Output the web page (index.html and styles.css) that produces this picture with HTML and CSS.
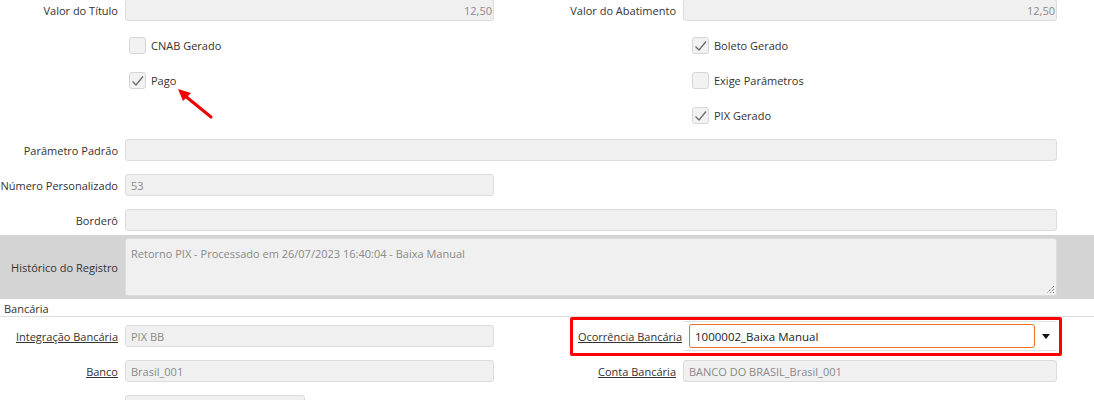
FILE: index.html
```html
<!DOCTYPE html>
<html lang="pt-BR">
<head>
<meta charset="utf-8">
<title>Registro</title>
<link rel="stylesheet" href="styles.css">
</head>
<body>
<div class="page">
  <div class="form">
    <div class="lbl">Valor do Título</div>
    <div class="field num">12,50</div>
    <div class="lbl">Valor do Abatimento</div>
    <div class="field num">12,50</div>

    <div></div>
    <div class="chk-wrap"><span class="chk"></span><span class="chk-text">CNAB Gerado</span></div>
    <div></div>
    <div class="chk-wrap right"><span class="chk on"><svg viewBox="0 0 17 17" width="17" height="17"><path d="M3.5 9.5 L7 13 L14 4.5" fill="none" stroke="#6b6b6b" stroke-width="1.3"/></svg></span><span class="chk-text">Boleto Gerado</span></div>

    <div></div>
    <div class="chk-wrap"><span class="chk on"><svg viewBox="0 0 17 17" width="17" height="17"><path d="M3.5 9.5 L7 13 L14 4.5" fill="none" stroke="#6b6b6b" stroke-width="1.3"/></svg></span><span class="chk-text">Pago</span></div>
    <div></div>
    <div class="chk-wrap right"><span class="chk"></span><span class="chk-text">Exige Parâmetros</span></div>

    <div></div>
    <div></div>
    <div></div>
    <div class="chk-wrap right"><span class="chk on"><svg viewBox="0 0 17 17" width="17" height="17"><path d="M3.5 9.5 L7 13 L14 4.5" fill="none" stroke="#6b6b6b" stroke-width="1.3"/></svg></span><span class="chk-text">PIX Gerado</span></div>

    <div class="lbl">Parâmetro Padrão</div>
    <div class="field span3"></div>

    <div class="lbl">Número Personalizado</div>
    <div class="field">53</div>
    <div></div>
    <div></div>

    <div class="lbl">Borderô</div>
    <div class="field span3"></div>
  </div>

  <div class="hist">
    <div class="lbl hist-lbl">Histórico do Registro</div>
    <div class="textarea">Retorno PIX - Processado em 26/07/2023 16:40:04 - Baixa Manual<svg class="grip" viewBox="0 0 10 10" width="10" height="10"><path d="M9 2 L2 9 M9 5 L5 9 M9 8 L8 9" stroke="#555" stroke-width="1" stroke-dasharray="1 1"/></svg></div>
  </div>

  <div class="section">Bancária</div>

  <div class="form bank">
    <div class="lbl link">Integração Bancária</div>
    <div class="field">PIX BB</div>
    <div class="lbl link occ-lbl">Ocorrência Bancária</div>
    <div class="combo">
      <div class="combo-input">1000002_Baixa Manual</div>
      <div class="combo-btn"><span class="caret"></span></div>
    </div>

    <div class="lbl link">Banco</div>
    <div class="field">Brasil_001</div>
    <div class="lbl link">Conta Bancária</div>
    <div class="field">BANCO DO BRASIL_Brasil_001</div>

    <div></div>
    <div class="field short"></div>
  </div>

  <div class="highlight"></div>
  <svg class="arrow" viewBox="0 0 50 40" width="50" height="40">
    <line x1="41" y1="33" x2="14" y2="11" stroke="#f00000" stroke-width="3" stroke-linecap="round"/>
    <polygon points="8,5 21,9 13,17" fill="#f00000"/>
  </svg>
</div>
</body>
</html>
```
FILE: styles.css
```css
* { box-sizing: border-box; }
html, body { margin: 0; padding: 0; background: #fff; }
body {
  font-family: "Open Sans", "Noto Sans", sans-serif;
  font-size: 11px;
  color: #333;
  width: 1094px;
  height: 400px;
  overflow: hidden;
}
.page { position: relative; }

.form {
  display: grid;
  grid-template-columns: 118px 369px 175px 374px;
  grid-auto-rows: 22px;
  column-gap: 7px;
  row-gap: 13px;
  margin-top: -1px;
}
.lbl {
  display: flex;
  align-items: center;
  justify-content: flex-end;
  white-space: nowrap;
  color: #333;
}
.field {
  background: #f0f0f0;
  border: 1px solid #dcdcdc;
  border-radius: 3px;
  color: #8a8a8a;
  display: flex;
  align-items: center;
  padding: 0 5px;
  white-space: nowrap;
  overflow: hidden;
}
.field.num { justify-content: flex-end; padding-right: 1px; }
.span3 { grid-column: 2 / 5; }

.chk-wrap { display: flex; align-items: center; padding-left: 4px; }
.chk-wrap.right { padding-left: 9px; }
.chk {
  width: 17px; height: 17px;
  border: 1px solid #d6d6d6;
  border-radius: 3px;
  background: #f2f2f2;
  display: inline-block;
  position: relative;
  flex: none;
}
.chk svg { position: absolute; left: -1px; top: -1px; }
.chk-text { margin-left: 5px; color: #333; }

.hist {
  display: flex;
  background: #d4d4d4;
  margin-top: 4px;
  height: 64px;
  padding: 3px 0;
  column-gap: 7px;
}
.hist-lbl { width: 118px; flex: none; }
.textarea {
  width: 932px;
  height: 58px;
  background: #f0f0f0;
  border: 1px solid #dcdcdc;
  border-radius: 3px;
  color: #8a8a8a;
  padding: 7px 5px;
  position: relative;
}
.grip { position: absolute; right: 1px; bottom: 1px; }

.section {
  height: 18px;
  line-height: 16px;
  padding-top: 2px;
  padding-left: 4px;
  border-bottom: 1px solid #dedede;
  color: #333;
}

.form.bank { margin-top: 8px; }
.link { text-decoration: underline; color: #333; }
.occ-lbl { margin-right: -6px; }
.combo {
  display: flex;
  align-items: stretch;
  border-top: 1px solid #e2e2e2;
  border-bottom: 1px solid #e2e2e2;
  margin-top: -4px;
  height: 30px;
  padding: 2px 0;
}
.combo-input {
  margin-left: 6px;
  width: 346px;
  border: 1px solid #f07020;
  border-radius: 3px;
  background: #fff;
  color: #222;
  font-size: 11.5px;
  display: flex;
  align-items: center;
  padding: 0 5px;
}
.combo-btn {
  flex: 1;
  display: flex;
  align-items: center;
  justify-content: center;
}
.caret {
  width: 0; height: 0;
  border-left: 4.5px solid transparent;
  border-right: 4.5px solid transparent;
  border-top: 5px solid #111;
}
.short { width: 180px; }

.highlight {
  position: absolute;
  left: 570px;
  top: 318px;
  width: 492px;
  height: 39px;
  border: 3.5px solid #ff0000;
  border-radius: 2px;
  pointer-events: none;
}
.arrow {
  position: absolute;
  left: 170px;
  top: 85px;
}
```
